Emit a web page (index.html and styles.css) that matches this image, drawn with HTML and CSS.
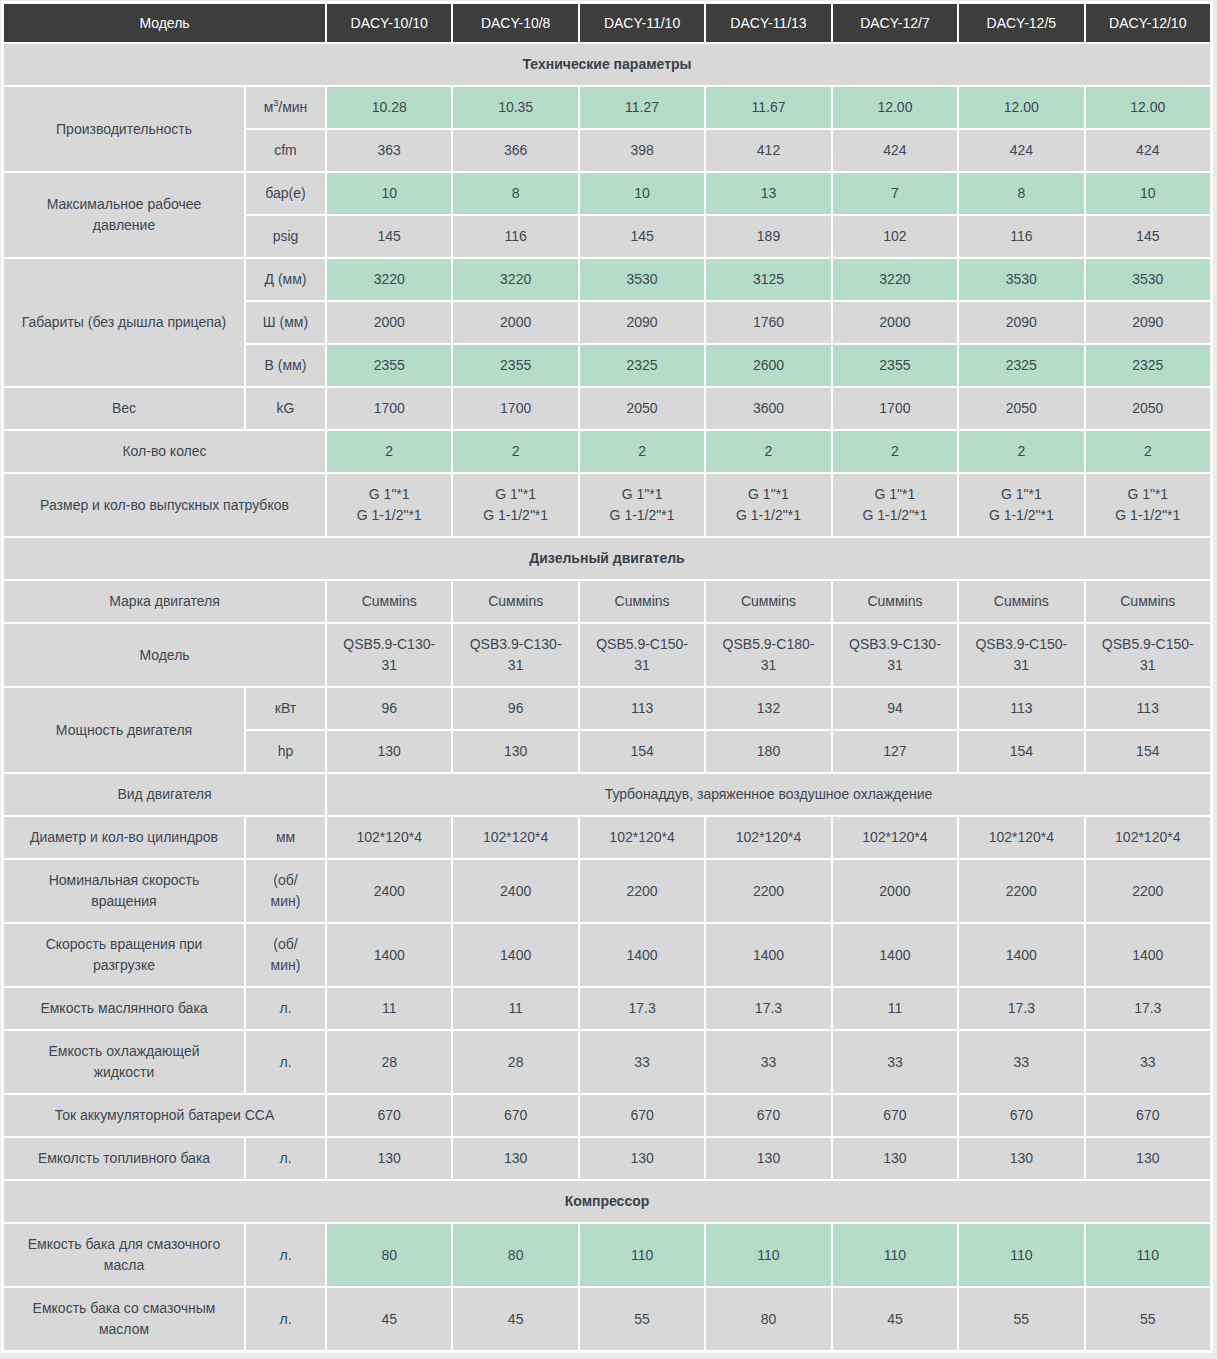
FILE: index.html
```html
<!DOCTYPE html>
<html lang="ru">
<head>
<meta charset="utf-8">
<title>DACY</title>
<link rel="stylesheet" href="styles.css">
</head>
<body>
<table class="spec">
<colgroup>
<col class="c-label"><col class="c-unit">
<col><col><col><col><col><col><col>
</colgroup>
<thead>
<tr class="head">
<th colspan="2">Модель</th><th>DACY-10/10</th><th>DACY-10/8</th><th>DACY-11/10</th><th>DACY-11/13</th><th>DACY-12/7</th><th>DACY-12/5</th><th>DACY-12/10</th>
</tr>
</thead>
<tbody>
<tr><td class="section" colspan="9">Технические параметры</td></tr>
<tr class="hl"><td class="label" rowspan="2">Производительность</td><td class="unit">м<sup>3</sup>/мин</td><td>10.28</td><td>10.35</td><td>11.27</td><td>11.67</td><td>12.00</td><td>12.00</td><td>12.00</td></tr>
<tr><td class="unit">cfm</td><td>363</td><td>366</td><td>398</td><td>412</td><td>424</td><td>424</td><td>424</td></tr>
<tr class="hl"><td class="label" rowspan="2">Максимальное рабочее давление</td><td class="unit">бар(е)</td><td>10</td><td>8</td><td>10</td><td>13</td><td>7</td><td>8</td><td>10</td></tr>
<tr><td class="unit">psig</td><td>145</td><td>116</td><td>145</td><td>189</td><td>102</td><td>116</td><td>145</td></tr>
<tr class="hl"><td class="label" rowspan="3">Габариты (без дышла прицепа)</td><td class="unit">Д (мм)</td><td>3220</td><td>3220</td><td>3530</td><td>3125</td><td>3220</td><td>3530</td><td>3530</td></tr>
<tr><td class="unit">Ш (мм)</td><td>2000</td><td>2000</td><td>2090</td><td>1760</td><td>2000</td><td>2090</td><td>2090</td></tr>
<tr class="hl"><td class="unit">В (мм)</td><td>2355</td><td>2355</td><td>2325</td><td>2600</td><td>2355</td><td>2325</td><td>2325</td></tr>
<tr><td class="label">Вес</td><td class="unit">kG</td><td>1700</td><td>1700</td><td>2050</td><td>3600</td><td>1700</td><td>2050</td><td>2050</td></tr>
<tr class="hl"><td class="label" colspan="2">Кол-во колес</td><td>2</td><td>2</td><td>2</td><td>2</td><td>2</td><td>2</td><td>2</td></tr>
<tr><td class="label" colspan="2">Размер и кол-во выпускных патрубков</td><td>G 1"*1<br>G 1-1/2"*1</td><td>G 1"*1<br>G 1-1/2"*1</td><td>G 1"*1<br>G 1-1/2"*1</td><td>G 1"*1<br>G 1-1/2"*1</td><td>G 1"*1<br>G 1-1/2"*1</td><td>G 1"*1<br>G 1-1/2"*1</td><td>G 1"*1<br>G 1-1/2"*1</td></tr>
<tr><td class="section" colspan="9">Дизельный двигатель</td></tr>
<tr><td class="label" colspan="2">Марка двигателя</td><td>Cuммins</td><td>Cuммins</td><td>Cuммins</td><td>Cuммins</td><td>Cuммins</td><td>Cuммins</td><td>Cuммins</td></tr>
<tr><td class="label" colspan="2">Модель</td><td>QSB5.9-C130-31</td><td>QSB3.9-C130-31</td><td>QSB5.9-C150-31</td><td>QSB5.9-C180-31</td><td>QSB3.9-C130-31</td><td>QSB3.9-C150-31</td><td>QSB5.9-C150-31</td></tr>
<tr><td class="label" rowspan="2">Мощность двигателя</td><td class="unit">кВт</td><td>96</td><td>96</td><td>113</td><td>132</td><td>94</td><td>113</td><td>113</td></tr>
<tr><td class="unit">hp</td><td>130</td><td>130</td><td>154</td><td>180</td><td>127</td><td>154</td><td>154</td></tr>
<tr><td class="label" colspan="2">Вид двигателя</td><td colspan="7">Турбонаддув, заряженное воздушное охлаждение</td></tr>
<tr><td class="label">Диаметр и кол-во цилиндров</td><td class="unit">мм</td><td>102*120*4</td><td>102*120*4</td><td>102*120*4</td><td>102*120*4</td><td>102*120*4</td><td>102*120*4</td><td>102*120*4</td></tr>
<tr><td class="label">Номинальная скорость вращения</td><td class="unit">(об/<br>мин)</td><td>2400</td><td>2400</td><td>2200</td><td>2200</td><td>2000</td><td>2200</td><td>2200</td></tr>
<tr><td class="label">Скорость вращения при разгрузке</td><td class="unit">(об/<br>мин)</td><td>1400</td><td>1400</td><td>1400</td><td>1400</td><td>1400</td><td>1400</td><td>1400</td></tr>
<tr><td class="label">Емкость маслянного бака</td><td class="unit">л.</td><td>11</td><td>11</td><td>17.3</td><td>17.3</td><td>11</td><td>17.3</td><td>17.3</td></tr>
<tr><td class="label">Емкость охлаждающей жидкости</td><td class="unit">л.</td><td>28</td><td>28</td><td>33</td><td>33</td><td>33</td><td>33</td><td>33</td></tr>
<tr><td class="label" colspan="2">Ток аккумуляторной батареи CCA</td><td>670</td><td>670</td><td>670</td><td>670</td><td>670</td><td>670</td><td>670</td></tr>
<tr><td class="label">Емколсть топливного бака</td><td class="unit">л.</td><td>130</td><td>130</td><td>130</td><td>130</td><td>130</td><td>130</td><td>130</td></tr>
<tr><td class="section" colspan="9">Компрессор</td></tr>
<tr class="hl"><td class="label">Емкость бака для смазочного масла</td><td class="unit">л.</td><td>80</td><td>80</td><td>110</td><td>110</td><td>110</td><td>110</td><td>110</td></tr>
<tr><td class="label">Емкость бака со смазочным маслом</td><td class="unit">л.</td><td>45</td><td>45</td><td>55</td><td>80</td><td>45</td><td>55</td><td>55</td></tr>
</tbody>
</table>
</body>
</html>
```
FILE: styles.css
```css
html, body {
  margin: 0;
  padding: 0;
}
body {
  background: #ebebeb;
  font-family: "Liberation Sans", Arial, Helvetica, sans-serif;
  font-size: 14px;
  color: #3c4753;
  padding-top: 1px;
  padding-left: 1px;
}
.spec {
  width: 1212px;
  table-layout: fixed;
  border-collapse: separate;
  border-spacing: 2px;
  border: 1px solid #fff;
  background: #fff;
}
.c-label { width: 240px; }
.c-unit { width: 79px; }
.spec th,
.spec td {
  text-align: center;
  vertical-align: middle;
  padding: 10px 12px;
  line-height: 21px;
  background: #d8d8d8;
  font-weight: normal;
}
.spec .head th {
  background: #3d3d3d;
  color: #fff;
  padding: 9px 8px;
  line-height: 20px;
}
.spec td.section {
  font-weight: bold;
  color: #35414d;
}
.spec td.label {
  padding-left: 16px;
  padding-right: 16px;
}
.spec td.unit {
  padding-left: 6px;
  padding-right: 6px;
}
.spec tr.hl td:not(.label):not(.unit) {
  background: #b4dcc9;
}
sup {
  font-size: 9px;
  line-height: 0;
  vertical-align: 6px;
}
```
